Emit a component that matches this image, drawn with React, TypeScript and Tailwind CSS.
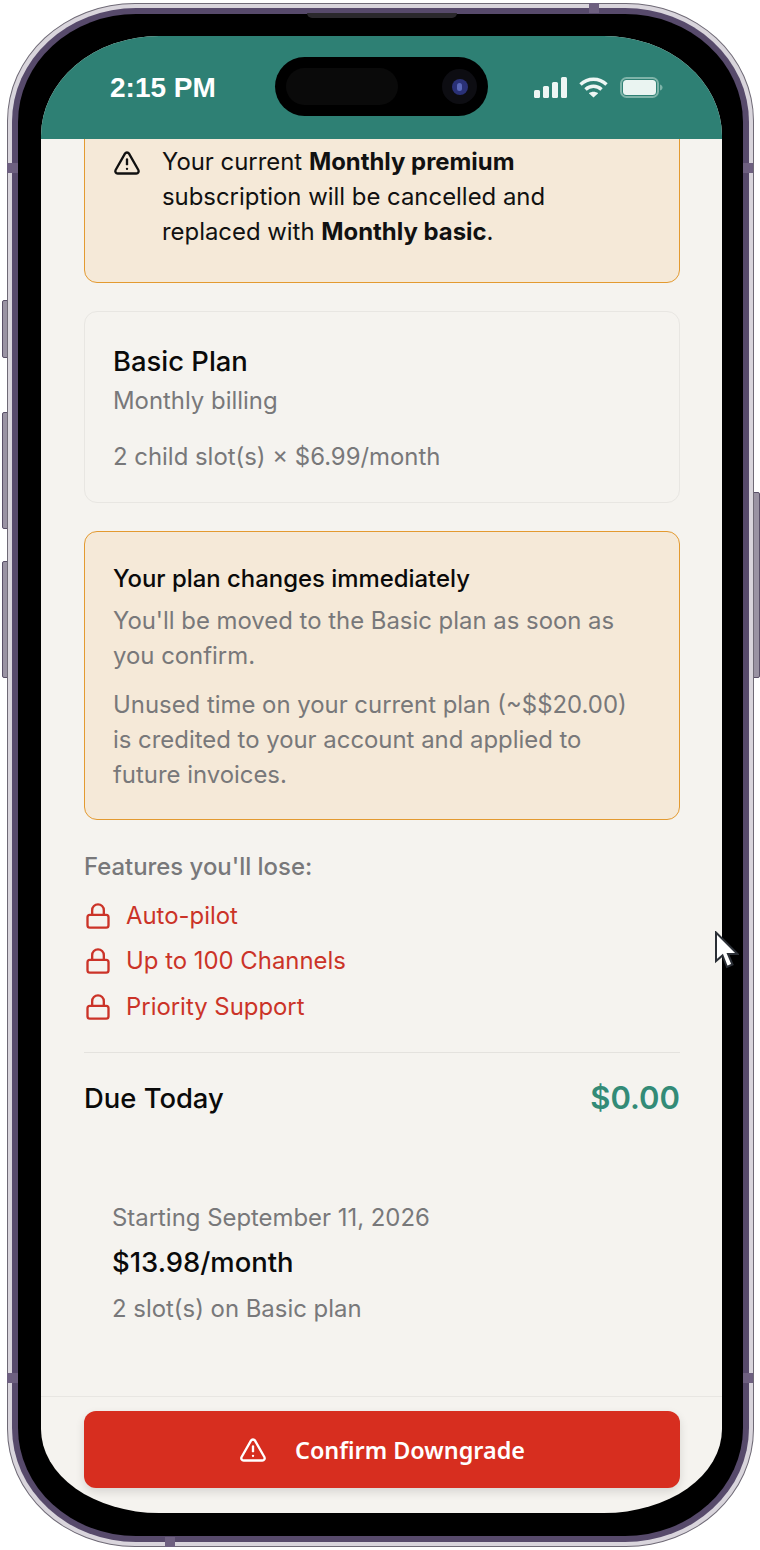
import { Lock, TriangleAlert } from "lucide-react";

const lostFeatures = ["Auto-pilot", "Up to 100 Channels", "Priority Support"];

function StatusIcons() {
  return (
    <div className="flex items-center gap-[12px]">
      <svg width="33" height="21" viewBox="0 0 33 21" fill="#eef6f4">
        <rect x="0" y="13" width="6" height="8" rx="1.5" />
        <rect x="9" y="9" width="6" height="12" rx="1.5" />
        <rect x="18" y="5" width="6" height="16" rx="1.5" />
        <rect x="27" y="0" width="6" height="21" rx="1.5" />
      </svg>
      <svg width="29" height="21" viewBox="0 0 29 21" fill="none" stroke="#eef6f4" strokeWidth="3.4">
        <path d="M1.5 7.5C8.8 0.5 20.2 0.5 27.5 7.5" />
        <path d="M6.5 12.5C11 8.2 18 8.2 22.5 12.5" />
        <path d="M14.5 20.5L9.8 16.2C12.6 14.2 16.4 14.2 19.2 16.2Z" fill="#eef6f4" stroke="none" />
      </svg>
      <svg width="43" height="21" viewBox="0 0 43 21">
        <rect x="1" y="1" width="37" height="19" rx="5.5" fill="none" stroke="#7fb4a9" strokeWidth="2" />
        <rect x="3" y="3" width="33" height="15" rx="3.5" fill="#eaf4f1" />
        <path d="M40 7.5C41.6 8 42.5 9 42.5 10.5C42.5 12 41.6 13 40 13.5Z" fill="#7fb4a9" />
      </svg>
    </div>
  );
}

function Cursor() {
  return (
    <svg className="absolute left-[714px] top-[931px]" width="25" height="38" viewBox="0 0 25 38">
      <path d="M2 1.5V30L8.5 24.5L13 36L18.5 33.5L14 23H23.5Z" fill="#fff" stroke="#2b2f36" strokeWidth="2" strokeLinejoin="miter" />
    </svg>
  );
}

export default function App() {
  return (
    <div className="relative w-[760px] h-[1550px] bg-white font-['Inter',sans-serif] overflow-hidden">
      {/* side buttons */}
      <div className="absolute left-[2px] top-[300px] w-[6px] h-[58px] rounded-l-[2px] bg-[#9a93a3] border border-[#5a5068]" />
      <div className="absolute left-[2px] top-[412px] w-[6px] h-[117px] rounded-l-[2px] bg-[#9a93a3] border border-[#5a5068]" />
      <div className="absolute left-[2px] top-[561px] w-[6px] h-[117px] rounded-l-[2px] bg-[#9a93a3] border border-[#5a5068]" />
      <div className="absolute left-[753px] top-[492px] w-[7px] h-[186px] rounded-r-[2px] bg-[#9a93a3] border border-[#5a5068]" />

      <div className="pt-[3px] pl-[7px] pr-[6px]">
        {/* frame */}
        <div className="relative h-[1544px] rounded-[128px/118px] bg-[#d9d5dc] border border-[#6f6a76] p-[4px]">
          <div className="h-full rounded-[124px/114px] bg-[#574a6b] p-[6px]">
            <div className="relative h-full rounded-[118px/108px] bg-black pl-[23px] pr-[21px] pt-[22px] pb-[23px]">
              <div className="absolute left-[289px] top-[-1px] w-[150px] h-[5px] rounded-b-[6px] bg-[#2a282c]" />

              {/* screen */}
              <div className="relative h-full rounded-[118px_118px_118px_118px/100px_100px_84px_84px] overflow-hidden bg-[#f5f3ef] flex flex-col">
                <div className="h-[103px] shrink-0 bg-[#2e8074] flex items-center justify-between pl-[69px] pr-[59px] relative z-10">
                  <span className="font-['Liberation_Sans',sans-serif] font-bold text-[28px] text-white">2:15 PM</span>
                  <StatusIcons />
                </div>

                {/* dynamic island */}
                <div className="absolute left-[234px] top-[21px] z-20 w-[213px] h-[59px] rounded-full bg-black">
                  <div className="absolute left-[11px] top-[11px] w-[112px] h-[37px] rounded-full bg-[#0a0a0a]" />
                  <div className="absolute left-[167px] top-[12px] w-[35px] h-[35px] rounded-full bg-[#0d0d12] flex items-center justify-center">
                    <div className="w-[16px] h-[16px] rounded-full bg-[#2a3177] flex items-center justify-center">
                      <div className="w-[5px] h-[8px] rounded-full bg-[#5a68b8]" />
                    </div>
                  </div>
                </div>

                <div className="flex-1 min-h-0 overflow-hidden pl-[43px] pr-[42px]">
                  <div className="mt-[-40px] flex gap-[21px] h-[184px] rounded-[13px] bg-[#f5e9d8] border border-[#e39a30] pl-[28px] pr-[60px] pt-[44px]">
                    <TriangleAlert size={28} strokeWidth={2} className="shrink-0 mt-[5px] text-[#111]" />
                    <p className="text-[23.9px] leading-[35px] text-[#111]">
                      Your current <b className="font-bold">Monthly premium</b> subscription will be cancelled and replaced with <b className="font-bold">Monthly basic</b>.
                    </p>
                  </div>

                  <div className="mt-[28px] h-[192px] rounded-[13px] border border-[#e8e6e2] pl-[28px] pt-[31px]">
                    <div className="text-[27.4px] leading-[36px] font-medium text-[#0a0a0a]">Basic Plan</div>
                    <div className="mt-[4px] text-[23.9px] leading-[36px] text-[#78787a]">Monthly billing</div>
                    <div className="mt-[20px] text-[23.9px] leading-[36px] text-[#78787a]">2 child slot(s) × $6.99/month</div>
                  </div>

                  <div className="mt-[28px] h-[289px] rounded-[13px] bg-[#f5e9d8] border border-[#e39a30] pl-[28px] pr-[40px] pt-[29px]">
                    <div className="text-[23.9px] leading-[36px] font-medium text-[#0a0a0a]">Your plan changes immediately</div>
                    <p className="mt-[6px] text-[23.9px] leading-[35px] text-[#78787a]">You'll be moved to the Basic plan as soon as you confirm.</p>
                    <p className="mt-[14px] text-[23.9px] leading-[35px] text-[#78787a]">Unused time on your current plan (~$$20.00) is credited to your account and applied to future invoices.</p>
                  </div>

                  <div className="mt-[29px] text-[23.9px] leading-[36px] font-medium text-[#78787a]">Features you'll lose:</div>
                  <div className="mt-[12.5px] flex flex-col gap-[9.5px]">
                    {lostFeatures.map(f => (
                      <div key={f} className="flex items-center gap-[14px] h-[36px] text-[23.9px] text-[#cb3328]">
                        <Lock size={28} strokeWidth={2} />
                        <span>{f}</span>
                      </div>
                    ))}
                  </div>

                  <div className="mt-[27.5px] border-t border-[#e4e2de] h-[92px] flex items-center justify-between">
                    <span className="text-[27.4px] font-medium text-[#0a0a0a]">Due Today</span>
                    <span className="text-[31px] font-semibold text-[#338b77]">$0.00</span>
                  </div>

                  <div className="mt-[56px] pl-[28px]">
                    <div className="text-[23.9px] leading-[36px] text-[#78787a]">Starting September 11, 2026</div>
                    <div className="mt-[8px] text-[27.4px] leading-[36px] font-medium text-[#0a0a0a]">$13.98/month</div>
                    <div className="mt-[11px] text-[23.9px] leading-[36px] text-[#78787a]">2 slot(s) on Basic plan</div>
                  </div>
                </div>

                <div className="shrink-0 h-[117px] border-t border-[#e8e6e2] pl-[43px] pr-[42px] pt-[14px]">
                  <button className="w-full h-[77px] rounded-[12px] bg-[#d72e1f] shadow-[0_4px_10px_rgba(0,0,0,0.12)] flex items-center justify-center gap-[28px] text-white">
                    <TriangleAlert size={28} strokeWidth={2} />
                    <span className="pt-[2px] font-['Noto_Sans',sans-serif] font-semibold text-[23.4px]">Confirm Downgrade</span>
                  </button>
                </div>
              </div>
            </div>
          </div>
        </div>
      </div>
      {/* antenna bands */}
      <div className="absolute left-[589px] top-[3px] w-[10px] h-[10px] bg-[#6e6080]" />
      <div className="absolute left-[165px] top-[1537px] w-[10px] h-[10px] bg-[#6e6080]" />
      <div className="absolute left-[7px] top-[163px] w-[11px] h-[10px] bg-[#6e6080]" />
      <div className="absolute left-[743px] top-[163px] w-[10px] h-[10px] bg-[#6e6080]" />
      <div className="absolute left-[7px] top-[1373px] w-[11px] h-[10px] bg-[#6e6080]" />
      <div className="absolute left-[743px] top-[1373px] w-[10px] h-[10px] bg-[#6e6080]" />
      <Cursor />
    </div>
  );
}
